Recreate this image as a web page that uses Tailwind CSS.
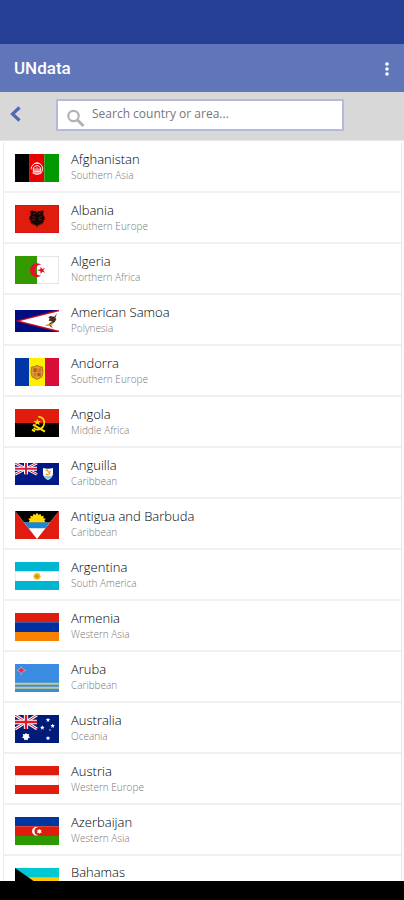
<!DOCTYPE html>
<html lang="en">
<head>
    <meta charset="UTF-8">
    <meta name="viewport" content="width=device-width, initial-scale=1.0">
    <title>UNdata</title>
    <script src="https://cdn.jsdelivr.net/npm/@tailwindcss/browser@4"></script>
</head>
<body class="flex h-screen flex-col overflow-hidden bg-white font-['Open_Sans','Noto_Sans',sans-serif]">

    <!-- Status bar -->
    <div class="h-11 shrink-0 bg-[#243f94]"></div>

    <!-- App bar -->
    <header class="flex h-12 shrink-0 items-center justify-between bg-[#6076b9] pt-0.5 pr-3 pl-3.5 text-white">
        <h1 class="font-[Roboto,sans-serif] text-[17px] font-medium">UNdata</h1>
        <button type="button" aria-label="More options">
            <svg class="h-4 w-2.5" viewBox="0 0 10 16" fill="currentColor"><circle cx="5" cy="3" r="1.8"/><circle cx="5" cy="8" r="1.8"/><circle cx="5" cy="13" r="1.8"/></svg>
        </button>
    </header>

    <!-- Search -->
    <div class="flex h-[49px] shrink-0 items-center border-b border-[#e6e6e6] bg-[#d8d8d8] pr-15 pb-0.5 pl-2">
        <button type="button" aria-label="Back" class="mb-0.5">
            <svg class="h-4 w-4" viewBox="0 0 16 16" fill="none" stroke="#4f69b5" stroke-width="3.2"><path d="M11.5 1.5 4.5 8l7 6.5"/></svg>
        </button>
        <label class="ml-8 flex h-8 flex-1 items-center border-2 border-[#b4bad8] bg-white pl-2">
            <svg class="mt-1.5 h-5 w-5 shrink-0" viewBox="0 0 20 20" fill="none" stroke="#b3b3b3"><circle cx="7.5" cy="8" r="5.2" stroke-width="2.2"/><path d="m11.5 12 6 6" stroke-width="3"/></svg>
            <input type="text" aria-label="Search country or area" placeholder="Search country or area..." class="ml-1.5 w-full min-w-0 pb-0.5 text-xs text-[#555] outline-none placeholder:text-[#777]">
        </label>
    </div>

    <!-- Country list -->
    <main class="min-h-0 flex-1 overflow-hidden pr-0.5 pl-[3px]">
        <ul class="mt-px border-x border-[#ebebeb] text-[13px] leading-4 font-light text-black [&_li]:flex [&_li]:h-[51px] [&_li]:items-center [&_li]:gap-3 [&_li]:border-b-2 [&_li]:border-[#f0f0f0] [&_li]:pt-0.5 [&_li]:pl-[11px] [&_p]:pb-0.5 [&_small]:block [&_small]:text-[10px] [&_small]:text-[#777] [&_svg]:w-11 [&_svg]:shrink-0">
            <li>
                <svg viewBox="0 0 132 84"><path fill="#000" d="M0 0h44v84H0z"/><path fill="#e80000" d="M44 0h44v84H44z"/><path fill="#009a00" d="M88 0h44v84H88z"/><g fill="none" stroke="#fff" stroke-width="3"><circle cx="66" cy="44" r="17" stroke-dasharray="40 10 60"/><path d="M55 52V42q11-15 22 0v10zM60 52v-9m6 9V40m6 12v-9M53 57h26M58 29q8-5 16 0"/></g></svg>
                <p>Afghanistan<small>Southern Asia</small></p>
            </li>
            <li>
                <svg viewBox="0 0 132 84"><path fill="#e01c0c" stroke="#c9101c" stroke-width="4" d="M0 0h132v84H0z"/><path fill="#160606" d="m66 23-4-5-7 1-3-3-8 4 4 3-2 5 3 3-5 1-1 13 5 0-4 5 5 1-2 5 6-1 0 5 5-3 1 5 3-3 4 8 4-8 3 3 1-5 5 3 0-5 6 1-2-5 5-1-4-5 5 0-1-13-5-1 3-3-2-5 4-3-8-4-3 3-7-1z"/><path stroke="#c9190c" stroke-width="2" d="m52 34 8 5m-8 4 8 2m20-11-8 5m8 4-8 2M62 25l-6 2m14-2 6 2"/></svg>
                <p>Albania<small>Southern Europe</small></p>
            </li>
            <li>
                <svg viewBox="0 0 132 84"><path fill="#fff" stroke="#ddd" stroke-width="4" d="M0 0h132v84H0z"/><path fill="#339900" d="M0 0h66v84H0z"/><path fill="#e3122a" d="M80 27a21 21 0 1 0 0 31 16 16 0 1 1 0-31"/><path fill="#e3122a" d="m67 43 9-3 1-8 5 7 8-3-5 7 5 7-8-3-5 7-1-8z"/></svg>
                <p>Algeria<small>Northern Africa</small></p>
            </li>
            <li>
                <svg viewBox="0 0 132 66"><path fill="#000c80" d="M0 0h132v66H0z"/><path fill="#c80a28" d="M0 33 132-1v68z"/><path fill="#fff" d="M15 33 132 4v58z"/><path fill="#4b2b1d" d="m126 10-8 10-13-2-5 5 4 2-3 7 10 2-4 5 12-2 5-9-3-5z"/><path fill="#c79b33" d="m91 45 10-3 6-6 2 6 9 5-8-1-4 5-3-4-10 1z"/><path stroke="#4b2b1d" stroke-width="3" d="m104 45 8 8m-8-12 12-3"/></svg>
                <p>American Samoa<small>Polynesia</small></p>
            </li>
            <li>
                <svg viewBox="0 0 132 84"><path fill="#0036a7" d="M0 0h42v84H0z"/><path fill="#fff000" d="M42 0h48v84H42z"/><path fill="#d80e38" d="M90 0h42v84H90z"/><path fill="#d6a72f" stroke="#b76a20" stroke-width="3" d="M50 27q8 1 16-5 8 6 16 5l2 13-3 16q-8 5-15 8-8-3-15-8l-3-16z"/><path fill="#c94b24" d="M55 31h10v11H55zm12 13h10v11H67z"/><path stroke="#c94b24" stroke-width="2" d="M69 31v11m4-11v11m4-11v11M56 46h8m-8 4h8m-8 4h8"/></svg>
                <p>Andorra<small>Southern Europe</small></p>
            </li>
            <li>
                <svg viewBox="0 0 132 84"><path fill="#e01c0c" d="M0 0h132v42H0z"/><path d="M0 42h132v42H0z"/><path fill="none" stroke="#ffe000" stroke-width="5" d="M70 23q17 2 18 18-1 16-16 20-10 3-16-5"/><path stroke="#ffe000" stroke-width="6" d="m54 47 36 21M51 62l9 5"/><path fill="#ffe000" d="m67 29 3 7h8l-6 5 2 8-7-5-7 5 2-8-6-5h8z"/></svg>
                <p>Angola<small>Middle Africa</small></p>
            </li>
            <li>
                <svg viewBox="0 0 132 66"><path fill="#001985" d="M0 0h132v66H0z"/><g><path stroke="#fff" stroke-width="8" d="m0 0 66 34M66 0 0 34"/><path stroke="#d5203d" stroke-width="3" d="m0 0 66 34M66 0 0 34"/><path stroke="#fff" stroke-width="12" d="M33 0v34M0 17h66"/><path stroke="#d5203d" stroke-width="6" d="M33 0v34M0 17h66"/></g><path fill="#fff" d="M84 15q15 5 30 0v18q-2 12-15 18-13-6-15-18z"/><path fill="#8ac9df" d="M86 38h26q-3 7-13 12-10-5-13-12"/><path fill="none" stroke="#eea02e" stroke-width="4" d="M92 23q5-5 7 2t8-1m-15 8q6 6 14-1"/></svg>
                <p>Anguilla<small>Caribbean</small></p>
            </li>
            <li>
                <svg viewBox="0 0 132 84"><path fill="#e01c12" d="M0 0h132v84H0z"/><path fill="#fff" d="M0 0h132L66 84z"/><path fill="#1687da" d="M27 34h78L91 52H41z"/><path d="M0 0h132l-27 34H27z"/><path fill="#ffd900" d="m41 34 3-6-5-5 8-1-1-8 7 2 3-8 5 4 5-7 5 7 5-4 3 8 7-2-1 8 8 1-5 5 3 6z"/></svg>
                <p>Antigua and Barbuda<small>Caribbean</small></p>
            </li>
            <li>
                <svg viewBox="0 0 132 84"><path fill="#fff" d="M0 0h132v84H0z"/><path fill="#00b5cf" d="M0 0h132v28H0zM0 57h132v27H0z"/><path stroke="#ddd" stroke-width="2" d="M1 28v29m130-29v29"/><path fill="#edb313" d="m66 31 3 4 5-1 0 5 4 4-4 4 0 5-5-1-3 4-3-4-5 1 0-5-4-4 4-4 0-5 5 1z"/><circle cx="66" cy="43" r="4" fill="#c69119"/></svg>
                <p>Argentina<small>South America</small></p>
            </li>
            <li>
                <svg viewBox="0 0 132 84"><path fill="#e01c0c" d="M0 0h132v28H0z"/><path fill="#0030a0" d="M0 28h132v29H0z"/><path fill="#fb8100" d="M0 57h132v27H0z"/></svg>
                <p>Armenia<small>Western Asia</small></p>
            </li>
            <li>
                <svg viewBox="0 0 132 84"><path fill="#398ce0" d="M0 0h132v84H0z"/><path fill="#c9cb86" d="M0 56h132v6H0zM0 68h132v6H0z"/><path fill="#e12c43" stroke="#fff" stroke-opacity=".7" stroke-width="1.5" d="m19 7 4 8 9 4-9 4-4 9-4-9-9-4 9-4z"/></svg>
                <p>Aruba<small>Caribbean</small></p>
            </li>
            <li>
                <svg viewBox="0 0 132 84"><path fill="#001b78" d="M0 0h132v84H0z"/><g><path stroke="#fff" stroke-width="9" d="m0 0 66 42M66 0 0 42"/><path stroke="#e01c2c" stroke-width="3" d="m0 0 66 42M66 0 0 42"/><path stroke="#fff" stroke-width="13" d="M33 0v42M0 21h66"/><path stroke="#e01c2c" stroke-width="7" d="M33 0v42M0 21h66"/></g><path fill="#fff" d="m33 53 3 5 7-1-2 6 4 5-6 2-1 6-5-2-5 2-1-6-6-2 4-5-2-6 7 1zM99 8l2 4 5 1-4 3 1 5-4-3-4 3 1-5-4-3 5-1zM82 31l2 4 5 1-4 3 1 5-4-3-4 3 1-5-4-3 5-1zM113 26l2 4 5 1-4 3 1 5-4-3-4 3 1-5-4-3 5-1zM99 63l2 4 5 1-4 3 1 5-4-3-4 3 1-5-4-3 5-1z"/><circle cx="105" cy="45" r="2" fill="#fff"/></svg>
                <p>Australia<small>Oceania</small></p>
            </li>
            <li>
                <svg viewBox="0 0 132 84"><path fill="#fff" d="M0 0h132v84H0z"/><path fill="#e01c0c" d="M0 0h132v28H0zM0 57h132v27H0z"/><path stroke="#ddd" stroke-width="2" d="M1 28v29m130-29v29"/></svg>
                <p>Austria<small>Western Europe</small></p>
            </li>
            <li>
                <svg viewBox="0 0 132 84"><path fill="#0036a0" d="M0 0h132v28H0z"/><path fill="#e01c0c" d="M0 28h132v29H0z"/><path fill="#2d9900" d="M0 57h132v27H0z"/><path fill="#fff" d="M70 31a13 13 0 1 0 0 23 11 11 0 1 1 0-23"/><path fill="#fff" d="m73 35 2 4 5-1-2 5 2 5-5-1-2 4-2-4-5 1 2-5-2-5 5 1z"/></svg>
                <p>Azerbaijan<small>Western Asia</small></p>
            </li>
            <li>
                <svg viewBox="0 0 132 84"><path fill="#00c8d3" d="M0 0h132v84H0z"/><path fill="#ffc700" d="M0 28h132v29H0z"/><path d="m0 0 60 42L0 84z"/></svg>
                <p class="self-start pt-1.5">Bahamas</p>
            </li>
        </ul>
    </main>

    <!-- Navigation bar -->
    <div class="h-[19px] shrink-0 bg-black"></div>

</body>
</html>
